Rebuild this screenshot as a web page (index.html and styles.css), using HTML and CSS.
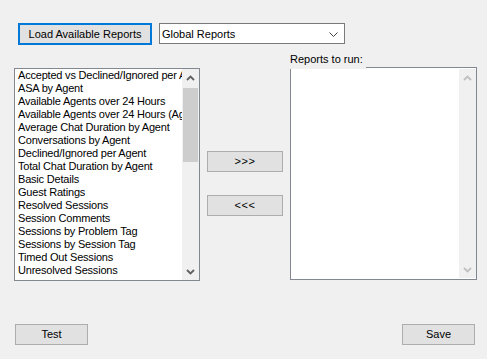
FILE: index.html
```html
<!DOCTYPE html>
<html>
<head>
<meta charset="utf-8">
<link rel="stylesheet" href="styles.css">
</head>
<body>
<div class="form">
  <div class="top">
    <button class="btn btn-focus">Load Available Reports</button>
    <div class="combo">
      <span>Global Reports</span>
      <svg class="combo-arrow" width="9" height="5" viewBox="0 0 9 5"><path d="M0.5 0.5 L4.5 4.5 L8.5 0.5" fill="none" stroke="#444" stroke-width="1"/></svg>
    </div>
  </div>
  <div class="middle">
    <div class="listbox left-list">
      <ul class="items">
        <li>Accepted vs Declined/Ignored per Agent</li>
        <li>ASA by Agent</li>
        <li>Available Agents over 24 Hours</li>
        <li>Available Agents over 24 Hours (Agent)</li>
        <li>Average Chat Duration by Agent</li>
        <li>Conversations by Agent</li>
        <li>Declined/Ignored per Agent</li>
        <li>Total Chat Duration by Agent</li>
        <li>Basic Details</li>
        <li>Guest Ratings</li>
        <li>Resolved Sessions</li>
        <li>Session Comments</li>
        <li>Sessions by Problem Tag</li>
        <li>Sessions by Session Tag</li>
        <li>Timed Out Sessions</li>
        <li>Unresolved Sessions</li>
      </ul>
      <div class="vscroll">
        <div class="sb-arrow">
          <svg width="9" height="6" viewBox="0 0 9 6"><path d="M1 5 L4.5 1.5 L8 5" fill="none" stroke="#606060" stroke-width="1.8"/></svg>
        </div>
        <div class="sb-track"><div class="sb-thumb"></div></div>
        <div class="sb-arrow">
          <svg width="9" height="6" viewBox="0 0 9 6"><path d="M1 1 L4.5 4.5 L8 1" fill="none" stroke="#606060" stroke-width="1.8"/></svg>
        </div>
      </div>
    </div>
    <div class="movers">
      <button class="btn mover">&gt;&gt;&gt;</button>
      <button class="btn mover">&lt;&lt;&lt;</button>
    </div>
    <div class="right-col">
      <div class="label-row"><span class="label">Reports to run:</span></div>
      <div class="listbox right-list">
        <div class="items"></div>
        <div class="vscroll disabled">
          <div class="sb-arrow">
            <svg width="9" height="6" viewBox="0 0 9 6"><path d="M1 5 L4.5 1.5 L8 5" fill="none" stroke="#c0c0c0" stroke-width="1.8"/></svg>
          </div>
          <div class="sb-track"></div>
          <div class="sb-arrow">
            <svg width="9" height="6" viewBox="0 0 9 6"><path d="M1 1 L4.5 4.5 L8 1" fill="none" stroke="#c0c0c0" stroke-width="1.8"/></svg>
          </div>
        </div>
      </div>
    </div>
  </div>
  <div class="bottom">
    <button class="btn small">Test</button>
    <button class="btn small">Save</button>
  </div>
</div>
</body>
</html>
```
FILE: styles.css
```css
* { box-sizing: border-box; }
html, body {
  margin: 0;
  padding: 0;
  background: #f0f0f0;
  width: 487px;
  height: 359px;
  overflow: hidden;
  font-family: "Liberation Sans", Arial, sans-serif;
  font-size: 11px;
  color: #000;
}
.form { width: 487px; height: 359px; overflow: hidden; }

.btn {
  font-family: "Liberation Sans", Arial, sans-serif;
  font-size: 11px;
  color: #000;
  background: #e1e1e1;
  border: 1px solid #adadad;
  padding: 0;
  margin: 0;
  height: 21px;
  line-height: 19px;
  text-align: center;
}
.btn-focus {
  border: 2px solid #0078d7;
  width: 134px;
  height: 22px;
  line-height: 18px;
}

.top {
  display: flex;
  gap: 7px;
  margin: 23px 0 0 18px;
  height: 22px;
}
.combo {
  width: 186px;
  height: 21px;
  background: #fff;
  border: 1px solid #7a7a7a;
  display: flex;
  align-items: center;
  justify-content: space-between;
  padding: 0 6px 0 2px;
}
.combo-arrow { margin-top: 1px; }

.middle {
  display: flex;
  gap: 7px;
  margin: 8px 0 0 14px;
  align-items: flex-start;
}
.listbox {
  background: #fff;
  border: 1px solid #828790;
  display: flex;
  height: 213px;
}
.left-list {
  width: 186px;
  margin-top: 15px;
}
.items {
  flex: 1;
  list-style: none;
  margin: 0;
  padding: 0 0 0 3px;
  overflow: hidden;
  white-space: nowrap;
  letter-spacing: -0.2px;
}
.items li {
  height: 13px;
  line-height: 13px;
}
.vscroll {
  width: 17px;
  background: #f0f0f0;
  display: flex;
  flex-direction: column;
}
.sb-arrow {
  height: 17px;
  display: flex;
  align-items: center;
  justify-content: center;
}
.sb-track {
  flex: 1;
  padding: 2px 1px 0 1px;
}
.sb-thumb {
  height: 74px;
  background: #cdcdcd;
}

.movers {
  width: 76px;
  display: flex;
  flex-direction: column;
  gap: 23px;
  padding-top: 98px;
}
.mover {
  width: 76px;
  letter-spacing: 0.5px;
}

.right-col {
  width: 187px;
}
.label-row {
  height: 15px;
  position: relative;
  z-index: 1;
  margin-bottom: -1px;
}
.label {
  display: inline-block;
  width: 76px;
  height: 16px;
  background: #f0f0f0;
  line-height: 12px;
}
.right-list {
  width: 187px;
}
.right-list .vscroll { margin: 1px 0; }

.bottom {
  display: flex;
  justify-content: space-between;
  margin-top: 43px;
  padding: 0 12px 0 15px;
}
.small {
  width: 73px;
  height: 21px;
}
```
